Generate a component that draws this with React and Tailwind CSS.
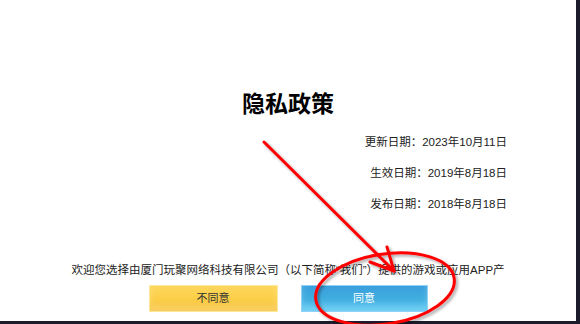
const Annotation = () => (
  <svg
    className="absolute inset-0 pointer-events-none"
    width="580"
    height="324"
    viewBox="0 0 580 324"
  >
    <defs>
      <filter id="shade" x="-20%" y="-20%" width="140%" height="140%">
        <feDropShadow dx="2" dy="2" stdDeviation="1.5" floodColor="#000" floodOpacity="0.35" />
      </filter>
    </defs>
    <g filter="url(#shade)" stroke="#ff0000" fill="none" strokeWidth="3" strokeLinecap="round">
      <line x1="264" y1="142" x2="394" y2="271" />
      <polyline points="370,262 394,271 387,247" strokeLinejoin="round" />
      <ellipse cx="385" cy="289" rx="70" ry="35" transform="rotate(-9 385 289)" />
    </g>
  </svg>
);

const DateRow = ({ label, value }) => (
  <p className="text-right text-[11.5px] leading-[16px] text-[#222]">
    {label}：{value}
  </p>
);

export default function App() {
  return (
    <div
      className="relative w-[580px] h-[324px] bg-[#1b1b2b] overflow-hidden"
      style={{ fontFamily: '"Liberation Sans", "Noto Sans CJK SC", sans-serif' }}
    >
      <div className="w-[576px] h-[321px] bg-white flex flex-col">
        <h1 className="mt-[90px] text-center text-[23px] leading-[28px] font-bold text-black">
          隐私政策
        </h1>

        <div className="mt-[16px] pr-[69px] flex flex-col gap-[15px]">
          <DateRow label="更新日期" value="2023年10月11日" />
          <DateRow label="生效日期" value="2019年8月18日" />
          <DateRow label="发布日期" value="2018年8月18日" />
        </div>

        <p className="mt-[50px] text-center text-[11.5px] leading-[16px] text-[#222] whitespace-nowrap">
          欢迎您选择由厦门玩聚网络科技有限公司（以下简称“我们”）提供的游戏或应用APP产
        </p>

        <div className="mt-[7px] flex justify-center gap-[23px]">
          <button className="w-[129px] h-[27px] border border-[#fde79a] bg-gradient-to-b from-[#fdd65c] via-[#fccf48] to-[#f5bc33] text-[11px] text-[#333] shadow-[inset_0_-6px_6px_rgba(255,240,180,0.35)]">
            不同意
          </button>
          <button className="w-[127px] h-[27px] border border-[#8fd2f5] bg-gradient-to-b from-[#3a9fdd] via-[#40addf] to-[#4fc3f1] text-[11px] text-white shadow-[inset_0_-6px_6px_rgba(200,240,255,0.3)]">
            同意
          </button>
        </div>
      </div>
      <Annotation />
    </div>
  );
}
